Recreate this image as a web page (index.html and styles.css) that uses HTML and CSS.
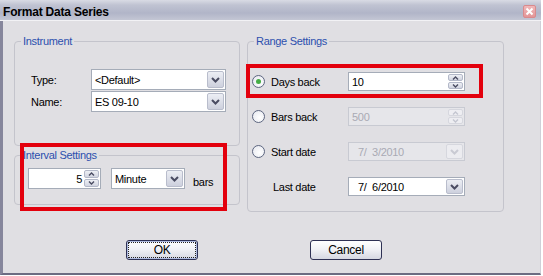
FILE: index.html
```html
<!DOCTYPE html>
<html>
<head>
<meta charset="utf-8">
<title>Format Data Series</title>
<link rel="stylesheet" href="styles.css">
</head>
<body>
<div class="window">
	<div class="titlebar">
		<span class="title">Format Data Series</span>
		<span class="close"><svg width="9" height="9" viewBox="0 0 9 9"><path d="M1.5 1.5l6 6M7.5 1.5l-6 6" stroke="#fff" stroke-width="2"/></svg></span>
	</div>
	<div class="body">
		<div class="columns">
			<div class="left">
				<fieldset class="group instrument">
					<legend>Instrument</legend>
					<div class="form-grid">
						<label>Type:</label>
						<div class="combo"><span class="val">&lt;Default&gt;</span><span class="drop"><svg width="9" height="6" viewBox="0 0 9 6"><path d="M1 1l3.5 3.5L8 1" fill="none" stroke="#4a4c62" stroke-width="2"/></svg></span></div>
						<label>Name:</label>
						<div class="combo"><span class="val">ES 09-10</span><span class="drop"><svg width="9" height="6" viewBox="0 0 9 6"><path d="M1 1l3.5 3.5L8 1" fill="none" stroke="#4a4c62" stroke-width="2"/></svg></span></div>
					</div>
				</fieldset>
				<fieldset class="group interval">
					<legend>Interval Settings</legend>
					<div class="interval-row">
						<div class="spinedit num"><span class="val">5</span><span class="spin"><span class="up"><svg width="7" height="4" viewBox="0 0 7 4"><path d="M1 3.5l2.5-2.5L6 3.5" fill="none" stroke="#4a4c62" stroke-width="1.4"/></svg></span><span class="down"><svg width="7" height="4" viewBox="0 0 7 4"><path d="M1 .5L3.5 3 6 .5" fill="none" stroke="#4a4c62" stroke-width="1.4"/></svg></span></span></div>
						<div class="combo minute"><span class="val">Minute</span><span class="drop"><svg width="9" height="6" viewBox="0 0 9 6"><path d="M1 1l3.5 3.5L8 1" fill="none" stroke="#4a4c62" stroke-width="2"/></svg></span></div>
						<span class="unit">bars</span>
					</div>
				</fieldset>
			</div>
			<fieldset class="group range">
				<legend>Range Settings</legend>
				<div class="range-grid">
					<label class="option"><span class="radio checked"></span>Days back</label>
					<div class="spinedit"><span class="val">10</span><span class="spin"><span class="up"><svg width="7" height="4" viewBox="0 0 7 4"><path d="M1 3.5l2.5-2.5L6 3.5" fill="none" stroke="#4a4c62" stroke-width="1.4"/></svg></span><span class="down"><svg width="7" height="4" viewBox="0 0 7 4"><path d="M1 .5L3.5 3 6 .5" fill="none" stroke="#4a4c62" stroke-width="1.4"/></svg></span></span></div>

					<label class="option"><span class="radio"></span>Bars back</label>
					<div class="spinedit disabled"><span class="val">500</span><span class="spin"><span class="up"><svg width="7" height="4" viewBox="0 0 7 4"><path d="M1 3.5l2.5-2.5L6 3.5" fill="none" stroke="#c4c6d0" stroke-width="1.4"/></svg></span><span class="down"><svg width="7" height="4" viewBox="0 0 7 4"><path d="M1 .5L3.5 3 6 .5" fill="none" stroke="#c4c6d0" stroke-width="1.4"/></svg></span></span></div>

					<label class="option"><span class="radio"></span>Start date</label>
					<div class="combo date disabled"><span class="val">7/&nbsp; 3/2010</span><span class="drop"><svg width="9" height="6" viewBox="0 0 9 6"><path d="M1 1l3.5 3.5L8 1" fill="none" stroke="#c9cad3" stroke-width="2"/></svg></span></div>

					<label class="option plain">Last date</label>
					<div class="combo date"><span class="val">7/&nbsp; 6/2010</span><span class="drop"><svg width="9" height="6" viewBox="0 0 9 6"><path d="M1 1l3.5 3.5L8 1" fill="none" stroke="#4a4c62" stroke-width="2"/></svg></span></div>
				</div>
			</fieldset>
		</div>
		<div class="buttons">
			<button type="button" class="btn default"><span>OK</span></button>
			<button type="button" class="btn">Cancel</button>
		</div>
		<div class="mark mark-interval"></div>
		<div class="mark mark-days"></div>
	</div>
</div>
</body>
</html>
```

FILE: styles.css
```css
*{box-sizing:border-box;}
html,body{margin:0; height:100%; overflow:hidden;}
body{background:#fff; font:11px "Liberation Sans", Arial, sans-serif; color:#000; letter-spacing:-0.3px;}

.window{width:541px; height:275px; display:flex; flex-direction:column; background:#e0dfe3;}
.titlebar{height:21px; flex:none; display:flex; align-items:center; justify-content:space-between; padding:3px 5px 0 3px; background:linear-gradient(#d9dbe4, #c0c3d2 25%, #b1b5c8 65%, #c3c6d4); border-bottom:1px solid #f2f2f5;}
.title{font-weight:bold; font-size:12px; letter-spacing:-0.2px;}
.close{width:13px; height:13px; display:flex; align-items:center; justify-content:center; background:linear-gradient(#f0b8ba, #e39597); border:1px solid #d98a8d; border-radius:2px;}

.body{flex:1; position:relative; padding:14px 0 0 11px; border-left:3px solid #86869c; border-bottom:2px solid #6c6c82; border-right:1px solid #cfcfd8;}
.columns{display:flex; align-items:flex-start; gap:7px;}
.left{width:226px; display:flex; flex-direction:column; gap:3px;}

.group{margin:0; min-width:0; padding:0; border:1px solid #c4c4cc; border-radius:4px;}
.group legend{margin-left:6px; padding:0 2px; line-height:13px; color:#2c4fae;}

.instrument{padding:21px 0 33px 0;}
.form-grid{display:grid; grid-template-columns:60px 135px; grid-auto-rows:21px; row-gap:1px; align-items:center; padding-left:16px;}

.combo,.spinedit{display:flex; align-items:center; height:100%; background:#fff; border:1px solid #a5acb8;}
.combo .val,.spinedit .val{flex:1; padding-left:3px; white-space:pre;}
.combo .drop{width:17px; align-self:stretch; margin:1px; display:flex; align-items:center; justify-content:center; background:linear-gradient(#eceef4, #cdd0dd); border:1px solid #b9bdcc; border-radius:2px;}
.combo.disabled{background:#e6e6ea; border-color:#c8cad2; color:#a9aab4;}
.combo.disabled .drop{background:#ececf0; border-color:#d6d7de;}

.spin{width:15px; align-self:stretch; margin:1px; display:flex; flex-direction:column; gap:1px;}
.spin span{flex:1; display:flex; align-items:center; justify-content:center; background:linear-gradient(#eef0f5, #d1d4e0); border:1px solid #b3b8c8; border-radius:2px;}
.spinedit.disabled{background:#e6e6ea; border-color:#c8cad2; color:#a9aab4;}
.spinedit.disabled .spin span{background:#eeeef2; border-color:#d6d7de;}
.spinedit.num .val{text-align:right; padding-right:1px;}

.interval{padding:6px 0 15px 0;}
.interval-row{display:flex; align-items:center; height:21px; padding-left:13px;}
.interval-row .spinedit{width:73px;}
.interval-row .minute{width:74px; margin-left:10px;}
.interval-row .unit{margin-left:8px; padding-top:6px;}

.range{width:257px; padding:24px 0 15px 0;}
.range-grid{display:grid; grid-template-columns:96px 117px; grid-auto-rows:19px; row-gap:16px; align-items:center; padding-left:4px;}
.option{display:flex; align-items:center; gap:6px;}
.option.plain{padding-left:21px;}
.radio{width:13px; height:13px; border-radius:50%; border:1px solid #5d6680; background:radial-gradient(circle at 60% 60%, #fff, #e4e6ee); display:flex; align-items:center; justify-content:center;}
.radio.checked::after{content:""; width:5px; height:5px; border-radius:50%; background:#45ad45;}
.combo.date .val{padding-left:9px;}

.buttons{display:flex; gap:112px; margin:28px 0 0 112px;}
.btn{width:72px; height:20px; padding:0; font:inherit; font-size:12px; color:#000; letter-spacing:-0.3px; border:1px solid #2e3154; border-radius:3px; background:linear-gradient(#ffffff, #f1f2f6 45%, #d6d8e2);}
.btn.default{box-shadow:inset 0 0 0 1px #aebbe0;}
.btn.default span{display:block; margin:2px; height:14px; line-height:14px; outline:1px dotted #222;}

.mark{position:absolute; border:4px solid #e3000d;}
.mark-interval{left:17px; top:122px; width:207px; height:68px;}
.mark-days{left:243px; top:43px; width:237px; height:34px;}
```
